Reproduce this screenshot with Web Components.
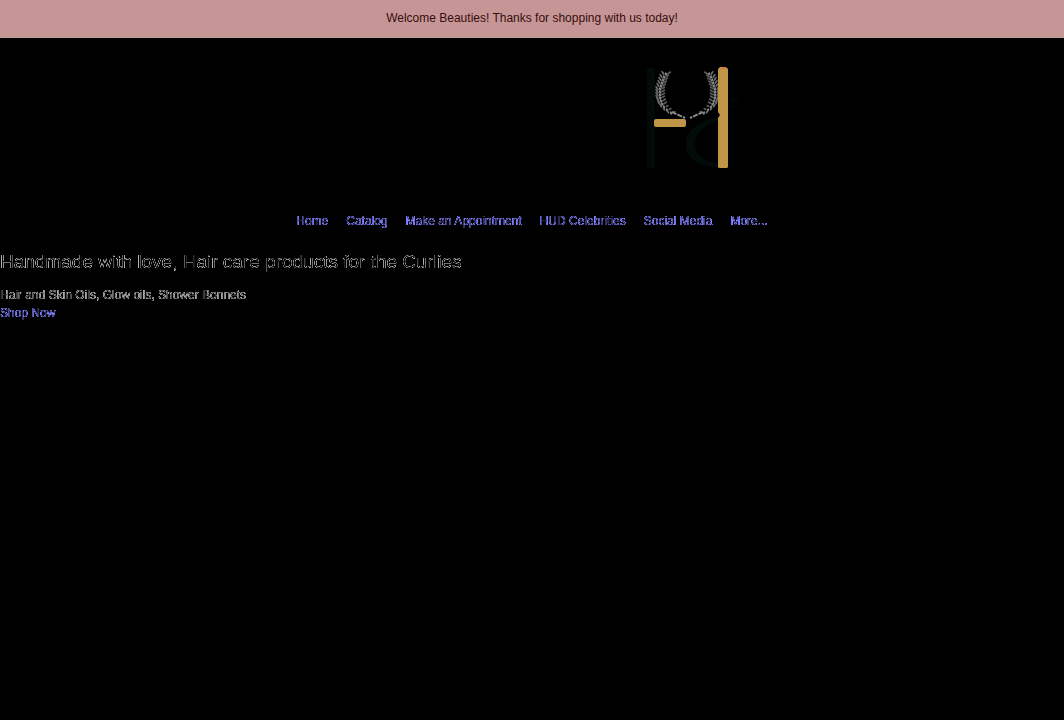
<!DOCTYPE html>
<html lang="en">
<head>
<meta charset="utf-8">
<title>Handmade hair care</title>
<style>
  body {
    margin: 0;
    background: #000;
    color: #ccc;
    font-family: "Liberation Sans", Arial, sans-serif;
    font-size: 12px;
    line-height: 18px;
  }
</style>
</head>
<body>
<store-banner>Welcome Beauties! Thanks for shopping with us today!</store-banner>
<store-header></store-header>
<store-hero>
  <span slot="title">Handmade with love, Hair care products for the Curlies</span>
  <span slot="text">Hair and Skin Oils, Glow oils, Shower Bonnets</span>
</store-hero>

<script>
  // keeps only the soft edges of the letters, the middle of each one goes black
  const EDGE_FILTER = `
    <svg width="0" height="0" style="position:absolute" aria-hidden="true">
      <filter id="edge" color-interpolation-filters="sRGB">
        <feComponentTransfer>
          <feFuncA type="table" tableValues="0 0.8 1 0.7 0.3"/>
        </feComponentTransfer>
      </filter>
      <filter id="edge-large" color-interpolation-filters="sRGB">
        <feComponentTransfer>
          <feFuncA type="table" tableValues="0 0.5 0.9 0.4 0"/>
        </feComponentTransfer>
      </filter>
    </svg>`;

  class StoreBanner extends HTMLElement {
    constructor() {
      super();
      this.attachShadow({ mode: "open" });
      this.shadowRoot.innerHTML = `
        <style>
          :host {
            display: block;
            padding: 9px 16px 10px;
            border-bottom: 1px solid #b8a0a0;
            background: #c69696;
            color: #370d0d;
            text-align: center;
          }
          p { margin: 0; }
        </style>
        <p><slot></slot></p>
      `;
    }
  }

  class StoreLogo extends HTMLElement {
    constructor() {
      super();
      this.attachShadow({ mode: "open" });
      this.shadowRoot.innerHTML = `
        <style>
          :host { display: block; }
          svg { display: block; }
        </style>
        <svg width="104" height="104" viewBox="0 0 104 104" role="img" aria-label="Store logo">
          <rect x="1" y="2" width="8" height="100" fill="#020b09"/>
          <path d="M72 50 C48 58 38 66 40 82 C42 94 54 100 72 101 V98 C60 96 50 90 49 80 C48 68 58 60 72 55Z" fill="#020b09"/>
          <path d="M84 33h10 M84 36h8 M84 40h9" stroke="#080808"/>
          <g id="leaves"></g>
          <rect x="8" y="53" width="32" height="8" rx="2" fill="#bf9648"/>
          <path d="M74 1 h6 l2 2 v98 l-1 1 h-8 l-1 -1 V52 l2 -3 l-2 -3 V3Z" fill="#bf9648"/>
          <path d="M74 2h6" stroke="#d9702a"/>
        </svg>
      `;
      this.drawLeaves();
    }

    drawLeaves() {
      const points = [[20, 7], [18, 10], [17, 13], [16, 16], [15, 19], [14, 22], [14, 25], [14, 28], [14, 31], [15, 34], [16, 37], [18, 40], [21, 43], [25, 46]];
      const leaf = (x, y, r, w, fill) =>
        `<ellipse cx="${x}" cy="${y}" rx="${w}" ry="1" fill="${fill}" transform="rotate(${r} ${x} ${y})"/>`;
      let side = "";
      points.forEach(([x, y], i) => {
        const w = i > 10 ? 1.8 : 2.6;
        side += leaf(x - 3, y, 55, w, "#6c6c6c") + leaf(x + 3, y, -30, w, "#5c5c5c") + leaf(x, y + 1, 75, 1.8, "#8c8c8c");
      });
      side += '<path d="M26 46 L39 52" fill="none" stroke="#888" stroke-width="2" stroke-dasharray="5 1"/>';
      this.shadowRoot.querySelector("#leaves").innerHTML =
        side + `<g transform="translate(83) scale(-1 1)">${side}</g>`;
    }
  }

  class StoreHeader extends HTMLElement {
    constructor() {
      super();
      this.attachShadow({ mode: "open" });
      this.shadowRoot.innerHTML = `
        ${EDGE_FILTER}
        <style>
          :host { display: block; padding: 28px 0 20px; }
          .brand {
            display: grid;
            grid-template-columns: 17fr 11fr;
          }
          store-logo { grid-column: 2; }
          nav {
            display: flex;
            justify-content: center;
            gap: 18px;
            margin-top: 42px;
          }
          a { color: #8282ff; text-decoration: none; filter: url(#edge); }
        </style>
        <div class="brand"><store-logo></store-logo></div>
        <nav>
          <a href="#">Home</a>
          <a href="#">Catalog</a>
          <a href="#">Make an Appointment</a>
          <a href="#">HUD Celebrities</a>
          <a href="#">Social Media</a>
          <a href="#">More...</a>
        </nav>
      `;
    }
  }

  class StoreHero extends HTMLElement {
    constructor() {
      super();
      this.attachShadow({ mode: "open" });
      this.shadowRoot.innerHTML = `
        ${EDGE_FILTER}
        <style>
          :host { display: block; }
          h1 {
            margin: 0 0 12px;
            font-size: 19px;
            font-weight: 400;
            line-height: 24px;
            filter: url(#edge-large);
          }
          p { margin: 0; color: #aaa; filter: url(#edge); }
          a { display: inline-block; color: #8282ff; text-decoration: none; filter: url(#edge); }
        </style>
        <h1><slot name="title"></slot></h1>
        <p><slot name="text"></slot></p>
        <a href="#">Shop Now</a>
      `;
    }
  }

  customElements.define("store-banner", StoreBanner);
  customElements.define("store-logo", StoreLogo);
  customElements.define("store-header", StoreHeader);
  customElements.define("store-hero", StoreHero);
</script>
</body>
</html>
